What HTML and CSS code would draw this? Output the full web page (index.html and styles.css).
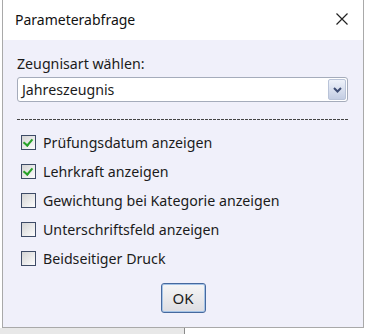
FILE: index.html
```html
<!DOCTYPE html>
<html lang="de">
<head>
    <meta charset="UTF-8">
    <title>Parameterabfrage</title>
    <link rel="stylesheet" href="styles.css">
</head>
<body>
    <div class="dialog">
        <div class="titlebar">
            <span class="title">Parameterabfrage</span>
            <svg class="close" width="12" height="12" viewBox="0 0 12 12">
                <path d="M0.5 0.5 L11.5 11.5 M11.5 0.5 L0.5 11.5" stroke="#222" stroke-width="1.2" fill="none"/>
            </svg>
        </div>
        <div class="content">
            <div class="label">Zeugnisart wählen:</div>
            <div class="combo">
                <span class="combo-text">Jahreszeugnis</span>
                <span class="combo-btn">
                    <svg width="9" height="6" viewBox="0 0 9 6">
                        <path d="M1 1 L4.5 4.5 L8 1" stroke="#3d4c73" stroke-width="2" fill="none"/>
                    </svg>
                </span>
            </div>
            <div class="separator"></div>
            <div class="options">
                <label class="option"><span class="box checked"></span>Prüfungsdatum anzeigen</label>
                <label class="option"><span class="box checked"></span>Lehrkraft anzeigen</label>
                <label class="option"><span class="box"></span>Gewichtung bei Kategorie anzeigen</label>
                <label class="option"><span class="box"></span>Unterschriftsfeld anzeigen</label>
                <label class="option"><span class="box"></span>Beidseitiger Druck</label>
            </div>
            <div class="actions">
                <button class="ok">OK</button>
            </div>
        </div>
    </div>
    <div class="behind"></div>
</body>
</html>
```

FILE: styles.css
```css
body {
    margin: 0;
    background: #fff;
    font-family: "Noto Sans", "Open Sans", sans-serif;
    color: #1b1b1b;
    width: 370px;
    height: 334px;
    overflow: hidden;
}
.dialog {
    margin-left: 2px;
    width: 362px;
    height: 328px;
    border: 1px solid #a9a9a9;
    border-top: none;
    background: #f0f0fa;
    box-sizing: border-box;
}
.titlebar {
    height: 40px;
    background: #fff;
    display: flex;
    align-items: center;
    justify-content: space-between;
    padding: 0 15px 2px 12px;
    box-sizing: border-box;
}
.title {
    font-size: 14px;
    color: #111;
}
.content {
    padding: 14px 14px 0 14px;
}
.label {
    font-size: 14.2px;
    height: 23px;
}
.combo {
    height: 25px;
    background: #fff;
    border: 1px solid #a5acbb;
    border-radius: 3px;
    display: flex;
    align-items: center;
    justify-content: space-between;
    box-sizing: border-box;
    padding: 0 1px 0 4px;
    margin-right: 1px;
}
.combo-text {
    font-size: 14.2px;
}
.combo-btn {
    width: 18px;
    height: 21px;
    border: 1px solid #b9c3d8;
    border-radius: 2px;
    background: linear-gradient(#eef2fa, #c3cde3);
    display: flex;
    align-items: center;
    justify-content: center;
    box-sizing: border-box;
}
.separator {
    height: 1px;
    margin: 17px 0 15px 0;
    background: repeating-linear-gradient(90deg, #444 0 3px, transparent 3px 4px);
}
.options {
    display: flex;
    flex-direction: column;
    gap: 14px;
    padding-left: 4px;
}
.option {
    display: flex;
    align-items: center;
    gap: 7px;
    font-size: 14.2px;
    height: 15px;
}
.box {
    width: 15px;
    height: 15px;
    border: 1px solid #3e4b66;
    box-sizing: border-box;
    background: linear-gradient(135deg, #d4d4d4, #fdfdfd);
    position: relative;
}
.box.checked::after {
    content: "";
    position: absolute;
    left: 3px;
    top: 1px;
    width: 4px;
    height: 7px;
    border: solid #27a127;
    border-width: 0 2px 2px 0;
    transform: rotate(40deg);
}
.actions {
    display: flex;
    justify-content: center;
    padding-top: 17px;
}
.ok {
    width: 45px;
    height: 30px;
    border: 1px solid #46699e;
    border-radius: 3px;
    background: linear-gradient(#f6f6f6, #dddde2);
    box-shadow: inset 0 0 0 1px #a4c3e6;
    font-family: "Noto Sans", sans-serif;
    font-size: 15px;
    color: #1b1b1b;
    padding: 0;
}
.behind {
    width: 184px;
    height: 6px;
    border-right: 1px solid #8a8a8a;
    background: #e8e8e8;
}
```
